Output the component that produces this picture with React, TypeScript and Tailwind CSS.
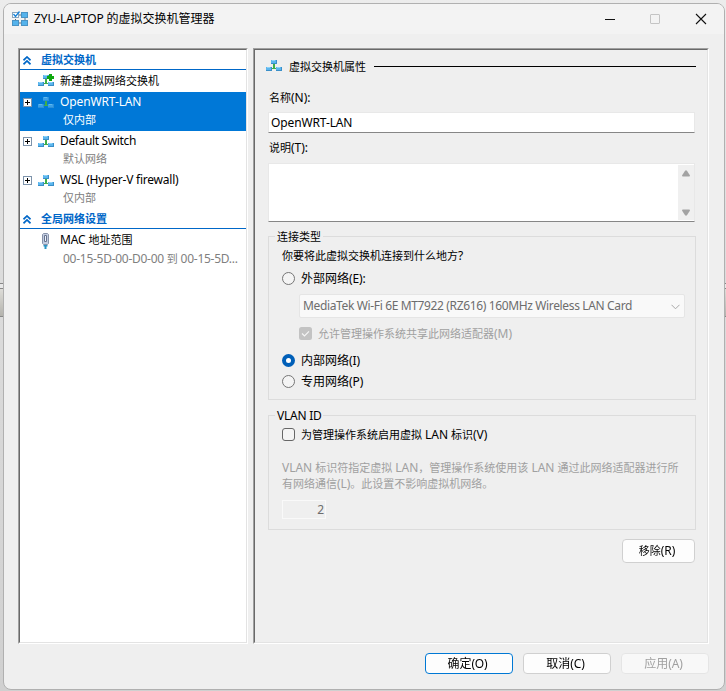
import { Fragment, type ReactNode } from "react";

const tight = "text-[12px] tracking-[-0.36px]";

/** Mixed script label: Latin runs are set slightly larger than the Chinese ones. */
function T({ children, className = "", size = "text-[11px]", latin = "text-[12px] tracking-[-0.12px]" }: { children: string; className?: string; size?: string; latin?: string }) {
  const parts = children.split(/([\x20-\x7e]+)/).filter(Boolean);
  return (
    <span className={`whitespace-pre ${size} ${className}`}>
      {parts.map((p, i) =>
        /^[\x20-\x7e]/.test(p) ? (
          <span key={i} className={latin}>{p}</span>
        ) : (
          <Fragment key={i}>{p}</Fragment>
        ),
      )}
    </span>
  );
}

function SwitchIcon({ plus = false, dim = false }: { plus?: boolean; dim?: boolean }) {
  const box = dim ? "#3aa0e8" : "#5cb6ee";
  const edge = dim ? "#2c8fd8" : "#3a8fc8";
  const shine = dim ? "#5fb8ee" : "#8fd3f7";
  return (
    <svg width="16" height="14" viewBox="0 0 16 14" className="shrink-0 overflow-visible" shapeRendering="crispEdges">
      <path d="M5 9h6v1H5z" fill="#8fc79a" />
      <path d="M7 5h2v4h1v1H6V9h1z" fill="#3fae49" />
      <rect x="5" y="1" width="6" height="4" fill={edge} />
      <rect x="5" y="1" width="5" height="3" fill={box} />
      <rect x="6" y="1" width="3" height="1" fill={shine} />
      <rect x="0" y="8" width="6" height="4" fill={edge} />
      <rect x="0" y="8" width="5" height="3" fill={box} />
      <rect x="1" y="8" width="3" height="1" fill={shine} />
      <rect x="10" y="8" width="6" height="4" fill={edge} />
      <rect x="10" y="8" width="5" height="3" fill={box} />
      <rect x="11" y="8" width="3" height="1" fill={shine} />
      {plus && <path d="M11 0h3v2h2v3h-2v2h-3V5H9V2h2z" fill="#0ea80e" />}
    </svg>
  );
}

function AdapterIcon() {
  return (
    <svg width="10" height="17" viewBox="0 0 10 17" className="shrink-0">
      <path d="M1.500 1.500l1-1h4l1 1v9l-1 1h-4l-1-1z" fill="#c3cde0" stroke="#8893aa" />
      <path d="M3.500 2.500h2v6h-2z" fill="#eef2fa" stroke="#66738f" />
      <path d="M2.500 12h4v1.500h-1V16h-2v-2.500h-1z" fill="#2b94c4" />
    </svg>
  );
}

function AppIcon() {
  return (
    <svg width="17" height="16" viewBox="0 0 17 16" className="shrink-0">
      <path d="M7 4h2M7 12h2M3.500 8v2M13 7v2" stroke="#5b7286" />
      <rect x=".5" y="1.500" width="6" height="5" fill="#fff" stroke="#8aa6bd" />
      <path d="M1.500 3l2 2.500L7.500.5" fill="none" stroke="#1581d8" strokeWidth="1.300" />
      <rect x="9.500" y="1.500" width="6" height="5" fill="#55b3ec" stroke="#4a93c4" />
      <rect x=".5" y="9.500" width="6" height="5" fill="#55b3ec" stroke="#4a93c4" />
      <rect x="9.500" y="9.500" width="6" height="5" fill="#55b3ec" stroke="#4a93c4" />
    </svg>
  );
}

function Expander() {
  return (
    <svg width="9" height="9" viewBox="0 0 9 9" className="shrink-0" shapeRendering="crispEdges">
      <rect width="9" height="9" fill="#7d93ab" />
      <rect x="1" y="1" width="7" height="7" fill="#fff" />
      <path d="M2 4h5v1H2zM4 2h1v5H4z" fill="#000" />
    </svg>
  );
}

function SectionHeader({ children }: { children: string }) {
  return (
    <div className="flex h-5 items-center border-b border-[#0067c8] pl-[3px] text-[#0067c8]">
      <svg width="8" height="9" viewBox="0 0 8 9" className="mt-[2px] shrink-0" fill="none" stroke="#0067c8" strokeWidth="1.700">
        <path d="M.5 4.300L4 1l3.500 3.300M.5 8.300L4 5l3.500 3.300" />
      </svg>
      <T className="ml-[10px] pt-px font-bold">{children}</T>
    </div>
  );
}

function SwitchItem({ name, sub, selected = false, latin }: { name: string; sub: string; selected?: boolean; latin?: string }) {
  return (
    <div className={`h-[39px] ${selected ? "bg-[#0078d7] text-white" : ""}`}>
      <div className="flex h-[20px] items-center pl-[3px]">
        <Expander />
        <span className="ml-[6px] flex pt-[2px]"><SwitchIcon dim={selected} /></span>
        <T className="ml-[6px]" latin={latin}>{name}</T>
      </div>
      <div className="flex h-[16px] items-center pl-[43px]">
        <T className={selected ? "" : "text-[#808080]"}>{sub}</T>
      </div>
    </div>
  );
}

function Radio({ checked = false }: { checked?: boolean }) {
  return checked ? (
    <span className="flex size-[13px] items-center justify-center rounded-full bg-[#005fb8]">
      <span className="size-[5px] rounded-full bg-white" />
    </span>
  ) : (
    <span className="size-[13px] rounded-full border border-[#767676] bg-[#f4f4f4]" />
  );
}

function Group({ title, className, children }: { title: string; className: string; children: ReactNode }) {
  return (
    <div className={`relative border border-[#dcdcdc] ${className}`}>
      <span className="absolute -top-[9px] left-[6px] flex h-[18px] items-center bg-[#efefef] px-[2px]">
        <T latin="text-[12px] tracking-[-0.25px]">{title}</T>
      </span>
      {children}
    </div>
  );
}

export default function App() {
  return (
    <div className="flex h-[691px] w-[726px] bg-[linear-gradient(#ececec,#dcdcdc_40%,#d0d0d0)] pt-[3px] pl-[3px] font-['Noto_Sans','Noto_Sans_CJK_SC',sans-serif] leading-[16px] text-black">
      <div className="fixed top-[283px] left-0 flex h-[34px] w-full justify-between">
        <div className="w-[3px] border-y border-[#888] bg-[linear-gradient(#e8e8e8_4px,#888_4px,#888_5px,#dddcd8_5px,#b4b3ad)]" />
        <div className="w-[2px] border-y border-[#888] bg-[linear-gradient(#e8e8e8_4px,#888_4px,#888_5px,#dddcd8_5px,#b4b3ad)]" />
      </div>
      <div className="relative flex h-[687px] w-[722px] flex-col overflow-hidden rounded-[8px] border border-[#b0b0b0] bg-[#efefef]">
        <header className="flex h-[30px] shrink-0 items-center bg-[#f3f3f3] pl-[8px]">
          <span className="-mt-px flex"><AppIcon /></span>
          <T className="ml-[5px]" size="text-[12px]" latin="text-[12px] tracking-[-0.1px]">ZYU-LAPTOP 的虚拟交换机管理器</T>
          <svg width="104" height="12" viewBox="0 0 104 12" className="-mt-px mr-[16px] ml-auto" fill="none">
            <path d="M1 6.500h10" stroke="#111" />
            <rect x="46.500" y="1.500" width="9" height="9" rx=".5" stroke="#c4c4c4" />
            <path d="M92 1l10 10M102 1l-10 10" stroke="#111" strokeWidth="1.100" />
          </svg>
        </header>

        <main className="mt-[14px] ml-[14px] flex h-[596px] shrink-0 gap-[5px]">
          <nav className="w-[230px] border border-t-[#a0a0a0] border-r-white border-b-white border-l-[#a0a0a0]">
            <div className="h-full border border-t-[#696969] border-r-[#e3e3e3] border-b-[#e3e3e3] border-l-[#696969] bg-white">
              <SectionHeader>虚拟交换机</SectionHeader>
              <div className="flex h-[22px] items-center pl-[18px]">
                <SwitchIcon plus />
                <T className="ml-[6px]">新建虚拟网络交换机</T>
              </div>
              <SwitchItem name="OpenWRT-LAN" sub="仅内部" selected />
              <SwitchItem name="Default Switch" sub="默认网络" latin={tight} />
              <SwitchItem name="WSL (Hyper-V firewall)" sub="仅内部" latin="text-[12px] tracking-[-0.23px]" />
              <SectionHeader>全局网络设置</SectionHeader>
              <div className="flex h-[22px] items-center pl-[21px]">
                <span className="flex pt-[2px]"><AdapterIcon /></span>
                <T className="ml-[9px]">MAC 地址范围</T>
              </div>
              <div className="flex h-[15px] items-center pl-[43px]">
                <T className="text-[#808080]" latin="text-[12px] tracking-[-0.27px]">00-15-5D-00-D0-00 到 00-15-5D...</T>
              </div>
            </div>
          </nav>

          <section className="w-[456px] border border-t-[#a0a0a0] border-r-white border-b-white border-l-[#a0a0a0]">
            <div className="flex h-full flex-col border border-t-[#696969] border-r-[#e3e3e3] border-b-[#e3e3e3] border-l-[#696969] pr-[11px] pl-[13px]">
              <div className="-ml-[2px] mt-[7px] flex h-[18px] shrink-0 items-center">
                <SwitchIcon />
                <T className="ml-[7px] pt-px">虚拟交换机属性</T>
                <span className="ml-auto h-px w-[322px] bg-black" />
              </div>
              <div className="mt-[14px] flex h-[18px] shrink-0 items-center pl-px"><T latin="text-[12px]">名称(N):</T></div>
              <div className="mt-[5px] mr-px flex h-[21px] shrink-0 items-center border border-[#e8e8e8] border-b-[#868686] bg-white pl-[2px]">
                <T>OpenWRT-LAN</T>
              </div>
              <div className="mt-[6px] flex h-[18px] shrink-0 items-center pl-px"><T latin="text-[12px]">说明(T):</T></div>
              <div className="mt-[6px] mr-px flex h-[59px] shrink-0 justify-end border border-[#e8e8e8] border-b-[#868686] bg-white">
                <div className="mt-px mb-px flex w-4 flex-col items-center justify-between bg-[#f0f0f0] pt-[5px] pb-[4px]">
                  <svg width="8" height="7" viewBox="0 0 8 7"><path d="M3.200.5h1.600L8 5.500 7.500 6.500h-7L0 5.500z" fill="#a3a3a3" /></svg>
                  <svg width="8" height="7" viewBox="0 0 8 7"><path d="M3.200 6.500h1.600L8 1.500 7.500.5h-7L0 1.500z" fill="#a3a3a3" /></svg>
                </div>
              </div>

              <Group title="连接类型" className="mt-[14px] h-[164px] shrink-0 pt-[10px] pl-[13px]">
                <div className="flex h-[17px] items-center"><T>你要将此虚拟交换机连接到什么地方?</T></div>
                <div className="mt-[5px] flex h-[18px] items-center gap-[6px]"><Radio /><T size="text-[12px]" className="pt-px">外部网络(E):</T></div>
                <div className="mt-[7px] ml-[17px] flex h-[24px] w-[386px] items-center justify-between rounded-[2px] border border-[#e5e5e5] bg-[#f9f9f9] pr-[4px] pl-[3px] text-[#6d6d6d]">
                  <T latin={tight}>MediaTek Wi-Fi 6E MT7922 (RZ616) 160MHz Wireless LAN Card</T>
                  <svg width="9" height="6" viewBox="0 0 9 6" className="mt-px" fill="none" stroke="#a8a8a8"><path d="M.5.8l4 4 4-4" /></svg>
                </div>
                <div className="mt-[7px] ml-[17px] flex h-[18px] items-center gap-[6px] text-[#a0a0a0]">
                  <svg width="13" height="13" viewBox="0 0 13 13" className="-mt-px"><rect width="13" height="13" rx="2.500" fill="#c3c3c3" /><path d="M3 6.500l2.500 2.500L10 4.300" fill="none" stroke="#f6f6f6" strokeWidth="1.100" /></svg>
                  <T latin="text-[12px]">允许管理操作系统共享此网络适配器(M)</T>
                </div>
                <div className="mt-[7px] flex h-[20px] items-center gap-[6px]"><Radio checked /><T size="text-[12px]" className="pt-px">内部网络(I)</T></div>
                <div className="flex h-[22px] items-center gap-[6px]"><Radio /><T size="text-[12px]" className="pt-px">专用网络(P)</T></div>
              </Group>

              <Group title="VLAN ID" className="mt-[15px] h-[115px] shrink-0 pt-[9px] pl-[13px]">
                <div className="flex h-[19px] items-center gap-[6px]">
                  <span className="size-[13px] rounded-[3px] border border-[#666] bg-[#f4f4f4]" />
                  <T className="pt-px" latin="text-[12px] tracking-[-0.06px]">为管理操作系统启用虚拟 LAN 标识(V)</T>
                </div>
                <div className="mt-[16px] flex h-[32px] flex-col text-[#a0a0a0]">
                  <span className="flex h-4 items-center"><T latin="text-[12px] tracking-[-0.03px]">VLAN 标识符指定虚拟 LAN，管理操作系统使用该 LAN 通过此网络适配器进行所</T></span>
                  <span className="flex h-4 items-center"><T>有网络通信(L)。此设置不影响虚拟机网络。</T></span>
                </div>
                <div className="mt-[8px] flex h-[19px] w-[44px] items-center justify-end border border-[#f9f9f9] pr-px text-[#6d6d6d]"><T>2</T></div>
              </Group>

              <button className="mt-[9px] mr-px flex h-[24px] w-[73px] shrink-0 items-center justify-center self-end rounded-[4px] border border-[#d0d0d0] bg-[#fdfdfd] pr-[3px]"><T>移除(R)</T></button>
            </div>
          </section>
        </main>

        <footer className="mt-[9px] mr-[15px] flex h-[21px] shrink-0 justify-end gap-[10px]">
          <button className="flex w-[88px] items-center justify-center rounded-[4px] border border-[#0078d4] bg-[#fdfdfd] pr-[3px]"><T size="text-[12px]" className="pt-px">确定(O)</T></button>
          <button className="flex w-[88px] items-center justify-center rounded-[4px] border border-[#d0d0d0] bg-[#fdfdfd] pr-[3px]"><T size="text-[12px]" className="pt-px">取消(C)</T></button>
          <button className="flex w-[88px] items-center justify-center rounded-[4px] border border-[#e5e5e5] bg-[#f8f8f8] pr-[3px] text-[#a0a0a0]"><T size="text-[12px]" className="pt-px">应用(A)</T></button>
        </footer>
      </div>
    </div>
  );
}
